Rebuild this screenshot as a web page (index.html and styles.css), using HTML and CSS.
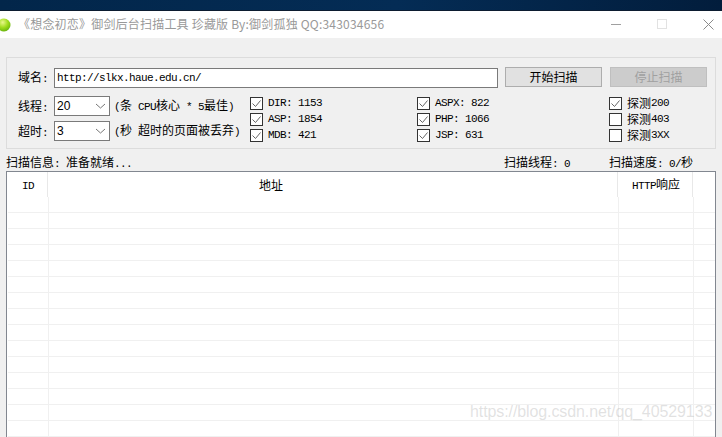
FILE: index.html
```html
<!DOCTYPE html>
<html lang="en">
  <head>
    <meta charset="UTF-8" />
    <title>御剑后台扫描工具</title>
    <link rel="stylesheet" href="styles.css">
  </head>
  <body>
    <div class="desktop-bar"></div>

    <div class="title-bar">
      <svg class="app-icon" width="11" height="14" viewBox="0 0 11 14">
        <defs>
          <radialGradient id="ball" cx="0.4" cy="0.3" r="0.8">
            <stop offset="0" stop-color="#e8f78a" />
            <stop offset="0.5" stop-color="#9fdc1c" />
            <stop offset="1" stop-color="#5aa80a" />
          </radialGradient>
        </defs>
        <circle cx="4" cy="7" r="6.5" fill="url(#ball)" />
      </svg>
      <span class="title-text">《想念初恋》御剑后台扫描工具 珍藏版 By:御剑孤独 QQ:343034656</span>
      <div class="window-controls">
        <svg width="11" height="11" viewBox="0 0 11 11"><path d="M0 5.5H10" stroke="#a0a0a0" /></svg>
        <svg width="11" height="11" viewBox="0 0 11 11"><rect x="0.5" y="0.5" width="9" height="9" fill="none" stroke="#e2e2e2" /></svg>
        <svg width="11" height="11" viewBox="0 0 11 11"><path d="M0.5 0.5L10.5 10.5M10.5 0.5L0.5 10.5" stroke="#8a8a8a" /></svg>
      </div>
    </div>

    <div class="main">
      <div class="group">
        <div class="url-row">
          <label class="field-label">域名<span class="lat">:</span></label>
          <div class="url-input lat">http://slkx.haue.edu.cn/</div>
          <button class="btn">开始扫描</button>
          <button class="btn disabled">停止扫描</button>
        </div>

        <div class="options-row">
          <div class="combos">
            <div class="combo-row">
              <label class="field-label">线程<span class="lat">:</span></label>
              <div class="combo">
                <span>20</span>
                <svg width="11" height="6" viewBox="0 0 11 6"><path d="M1 1L5.5 5L10 1" fill="none" stroke="#777" /></svg>
              </div>
              <span class="hint"><span class="lat">(</span>条<span class="lat"> CPU</span>核心<span class="lat"> * 5</span>最佳<span class="lat">)</span></span>
            </div>
            <div class="combo-row">
              <label class="field-label">超时<span class="lat">:</span></label>
              <div class="combo">
                <span>3</span>
                <svg width="11" height="6" viewBox="0 0 11 6"><path d="M1 1L5.5 5L10 1" fill="none" stroke="#777" /></svg>
              </div>
              <span class="hint"><span class="lat">(</span>秒<span class="lat"> </span>超时的页面被丢弃<span class="lat">)</span></span>
            </div>
          </div>

          <div class="checks">
            <div class="check-item"><svg class="box" viewBox="0 0 13 13"><rect x="0.5" y="0.5" width="12" height="12" fill="#fff" stroke="#333" /><path d="M2.5 6.5L5.5 9.5L10.5 3.5" fill="none" stroke="#666" /></svg><span class="lat">DIR: 1153</span></div>
            <div class="check-item"><svg class="box" viewBox="0 0 13 13"><rect x="0.5" y="0.5" width="12" height="12" fill="#fff" stroke="#333" /><path d="M2.5 6.5L5.5 9.5L10.5 3.5" fill="none" stroke="#666" /></svg><span class="lat">ASPX: 822</span></div>
            <div class="check-item"><svg class="box" viewBox="0 0 13 13"><rect x="0.5" y="0.5" width="12" height="12" fill="#fff" stroke="#333" /><path d="M2.5 6.5L5.5 9.5L10.5 3.5" fill="none" stroke="#666" /></svg>探测<span class="lat">200</span></div>
            <div class="check-item"><svg class="box" viewBox="0 0 13 13"><rect x="0.5" y="0.5" width="12" height="12" fill="#fff" stroke="#333" /><path d="M2.5 6.5L5.5 9.5L10.5 3.5" fill="none" stroke="#666" /></svg><span class="lat">ASP: 1854</span></div>
            <div class="check-item"><svg class="box" viewBox="0 0 13 13"><rect x="0.5" y="0.5" width="12" height="12" fill="#fff" stroke="#333" /><path d="M2.5 6.5L5.5 9.5L10.5 3.5" fill="none" stroke="#666" /></svg><span class="lat">PHP: 1066</span></div>
            <div class="check-item"><svg class="box" viewBox="0 0 13 13"><rect x="0.5" y="0.5" width="12" height="12" fill="#fff" stroke="#333" /></svg>探测<span class="lat">403</span></div>
            <div class="check-item"><svg class="box" viewBox="0 0 13 13"><rect x="0.5" y="0.5" width="12" height="12" fill="#fff" stroke="#333" /><path d="M2.5 6.5L5.5 9.5L10.5 3.5" fill="none" stroke="#666" /></svg><span class="lat">MDB: 421</span></div>
            <div class="check-item"><svg class="box" viewBox="0 0 13 13"><rect x="0.5" y="0.5" width="12" height="12" fill="#fff" stroke="#333" /><path d="M2.5 6.5L5.5 9.5L10.5 3.5" fill="none" stroke="#666" /></svg><span class="lat">JSP: 631</span></div>
            <div class="check-item"><svg class="box" viewBox="0 0 13 13"><rect x="0.5" y="0.5" width="12" height="12" fill="#fff" stroke="#333" /></svg>探测<span class="lat">3XX</span></div>
          </div>
        </div>
      </div>

      <div class="status-row">
        <span class="status-info">扫描信息<span class="lat">: </span>准备就绪<span class="lat">...</span></span>
        <span class="status-threads">扫描线程<span class="lat">: 0</span></span>
        <span class="status-speed">扫描速度<span class="lat">: 0/</span>秒</span>
      </div>

      <div class="table-wrap">
        <table class="results">
          <thead>
            <tr>
              <th class="col-id"><span class="lat">ID</span></th>
              <th class="col-url">地址</th>
              <th class="col-http"><span class="lat">HTTP</span>响应</th>
              <th class="col-rest"></th>
            </tr>
          </thead>
          <tbody>
            <tr><td></td><td></td><td></td><td></td></tr>
            <tr><td></td><td></td><td></td><td></td></tr>
            <tr><td></td><td></td><td></td><td></td></tr>
            <tr><td></td><td></td><td></td><td></td></tr>
            <tr><td></td><td></td><td></td><td></td></tr>
            <tr><td></td><td></td><td></td><td></td></tr>
            <tr><td></td><td></td><td></td><td></td></tr>
            <tr><td></td><td></td><td></td><td></td></tr>
            <tr><td></td><td></td><td></td><td></td></tr>
            <tr><td></td><td></td><td></td><td></td></tr>
            <tr><td></td><td></td><td></td><td></td></tr>
            <tr><td></td><td></td><td></td><td></td></tr>
            <tr><td></td><td></td><td></td><td></td></tr>
            <tr><td></td><td></td><td></td><td></td></tr>
            <tr><td></td><td></td><td></td><td></td></tr>
          </tbody>
        </table>
      </div>
    </div>

    <div class="watermark">https://blog.csdn.net/qq_40529133</div>
  </body>
</html>
```

FILE: styles.css
```css
/* Global Styles */
html,
body {
  height: 437px;
  overflow: hidden;
}

body {
  margin: 0;
  background: #f0f0f0;
  color: #000;
  font-family: "Noto Sans CJK SC", sans-serif;
  font-size: 12px;
  line-height: 16px;
}

/* Latin text in the old bitmap-like look, 6px per character */
.lat {
  font-family: "Liberation Mono", monospace;
  font-size: 11px;
  letter-spacing: -0.6px;
  white-space: pre;
}

.desktop-bar {
  height: 11px;
  background: linear-gradient(to right, #02264a, #042c55 55%, #021d3c);
  border-bottom: 1px solid #0c1c30;
  box-sizing: border-box;
}

/* Title bar */
.title-bar {
  display: flex;
  align-items: center;
  height: 27px;
  background: #fff;
}

.app-icon {
  flex: none;
}

.title-text {
  margin-left: 7px;
  margin-bottom: 2px;
  color: #999;
  letter-spacing: 0.2px;
  white-space: nowrap;
}

.window-controls {
  display: flex;
  gap: 35px;
  margin-left: auto;
  margin-right: 8px;
}

/* Main area */
.main {
  padding: 19px 6px 0;
}

.group {
  height: 92px;
  box-sizing: border-box;
  padding: 9px 8px 0 11px;
  border: 1px solid #dcdcdc;
}

.url-row {
  display: flex;
  align-items: flex-start;
}

.field-label {
  width: 36px;
  flex: none;
  line-height: 20px;
}

.url-input {
  width: 444px;
  height: 20px;
  margin-top: 1px;
  padding-left: 2px;
  box-sizing: border-box;
  background: #fff;
  border: 1px solid #7a7a7a;
  line-height: 18px;
}

.btn {
  width: 97px;
  height: 20px;
  margin-left: 8px;
  padding: 0;
  background: #e1e1e1;
  border: 1px solid #adadad;
  color: #000;
  font-family: inherit;
  font-size: 12px;
  line-height: 18px;
}

.url-input + .btn {
  margin-left: 7px;
}

.btn.disabled {
  background: #cccccc;
  border-color: #bfbfbf;
  color: #a0a0a0;
}

/* Thread and timeout options */
.options-row {
  display: flex;
  margin-top: 7px;
}

.combos {
  width: 232px;
  flex: none;
  display: flex;
  flex-direction: column;
  gap: 5px;
}

.combo-row {
  display: flex;
  height: 20px;
  white-space: nowrap;
}

.combo {
  display: flex;
  align-items: center;
  justify-content: space-between;
  width: 56px;
  height: 20px;
  padding: 0 3px 0 2px;
  box-sizing: border-box;
  background: #fff;
  border: 1px solid #7a7a7a;
  font-family: "Liberation Sans", sans-serif;
}

.hint {
  margin-left: 4px;
  line-height: 18px;
}

/* Checkboxes */
.checks {
  display: grid;
  grid-template-columns: 167px 192px 90px;
  grid-auto-rows: 16px;
  margin-top: -1px;
}

.check-item {
  display: flex;
  align-items: center;
  white-space: nowrap;
}

.box {
  width: 13px;
  height: 13px;
  margin-right: 5px;
  flex: none;
}

/* Status row */
.status-row {
  display: flex;
  height: 22px;
  box-sizing: border-box;
  padding-top: 5px;
  white-space: nowrap;
}

.status-info {
  width: 498px;
}

.status-threads {
  width: 105px;
}

/* Result table */
.table-wrap {
  height: 272px;
  box-sizing: border-box;
  padding-left: 1px;
  background: #fff;
  border: 1px solid #828790;
  overflow: hidden;
}

.results {
  width: 708px;
  table-layout: fixed;
  border-collapse: separate;
  border-spacing: 0;
}

.results th {
  height: 25px;
  padding: 0;
  font-weight: normal;
  border-right: 1px solid #fff;
  box-shadow: inset -1px 0 0 #e8e8e8;
  box-sizing: border-box;
}

.results td {
  height: 16px;
  padding: 0;
  box-sizing: border-box;
  border-right: 1px solid #f0f0f0;
  border-bottom: 1px solid #f0f0f0;
}

.col-id {
  width: 41px;
}

.results .col-url {
  width: 570px;
  text-align: left;
  padding-left: 210px;
}

.col-http {
  width: 75px;
}

.results .col-rest {
  border-right: none;
  box-shadow: none;
}

.results td:last-child {
  border-right: none;
}

/* Watermark over the table */
.watermark {
  position: absolute;
  left: 470px;
  top: 401px;
  color: rgba(170, 170, 170, 0.35);
  font-family: "Liberation Sans", sans-serif;
  font-size: 16px;
  letter-spacing: -0.1px;
  line-height: 22px;
  white-space: nowrap;
}
```
